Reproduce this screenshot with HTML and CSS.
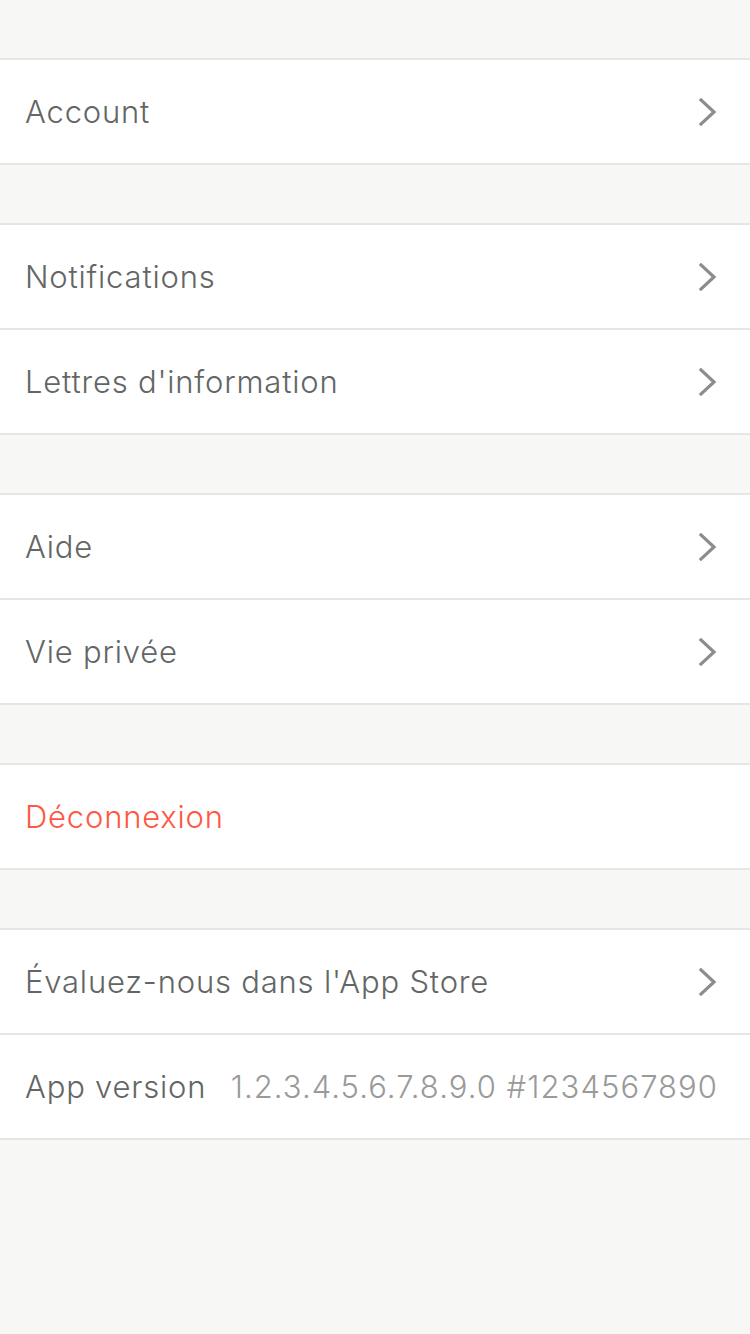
FILE: index.html
```html
<!DOCTYPE html>
<html>
<head>
<meta charset="utf-8">
<link rel="stylesheet" href="styles.css">
</head>
<body>
<div class="page">
  <section class="group">
    <div class="row"><span class="label">Account</span><svg class="chev" viewBox="0 0 18 28"><path d="M2 2 L15 14 L2 26"/></svg></div>
  </section>
  <section class="group">
    <div class="row"><span class="label">Notifications</span><svg class="chev" viewBox="0 0 18 28"><path d="M2 2 L15 14 L2 26"/></svg></div>
    <div class="row"><span class="label">Lettres d'information</span><svg class="chev" viewBox="0 0 18 28"><path d="M2 2 L15 14 L2 26"/></svg></div>
  </section>
  <section class="group">
    <div class="row"><span class="label">Aide</span><svg class="chev" viewBox="0 0 18 28"><path d="M2 2 L15 14 L2 26"/></svg></div>
    <div class="row"><span class="label">Vie privée</span><svg class="chev" viewBox="0 0 18 28"><path d="M2 2 L15 14 L2 26"/></svg></div>
  </section>
  <section class="group">
    <div class="row"><span class="label danger">Déconnexion</span></div>
  </section>
  <section class="group">
    <div class="row"><span class="label">Évaluez-nous dans l'App Store</span><svg class="chev" viewBox="0 0 18 28"><path d="M2 2 L15 14 L2 26"/></svg></div>
    <div class="row"><span class="label">App version</span><span class="value">1.2.3.4.5.6.7.8.9.0 #1234567890</span></div>
  </section>
</div>
</body>
</html>
```
FILE: styles.css
```css
html, body {
  margin: 0;
  padding: 0;
  background: #f7f7f5;
}
.page {
  width: 750px;
  min-height: 1334px;
  padding-top: 58px;
  box-sizing: border-box;
  font-family: Inter, "Liberation Sans", sans-serif;
}
.group {
  background: #fff;
  border-top: 2px solid #e6e6e6;
  border-bottom: 2px solid #e6e6e6;
  margin-bottom: 58px;
}
.row {
  height: 103px;
  display: flex;
  align-items: center;
  padding: 0 33px 0 25px;
}
.row + .row {
  border-top: 2px solid #e6e6e6;
}
.label {
  flex: 1;
  font-size: 31px;
  font-weight: 350;
  color: #636665;
  letter-spacing: 0.8px;
}
.label.danger {
  color: #ff5744;
}
.value {
  font-size: 31px;
  font-weight: 350;
  color: #9a9a9a;
  letter-spacing: 1.05px;
  margin-right: -1px;
}
.chev {
  width: 18px;
  height: 28px;
  fill: none;
  stroke: #8c8c8c;
  stroke-width: 3.2;
  stroke-linecap: square;
  stroke-linejoin: miter;
}
```
